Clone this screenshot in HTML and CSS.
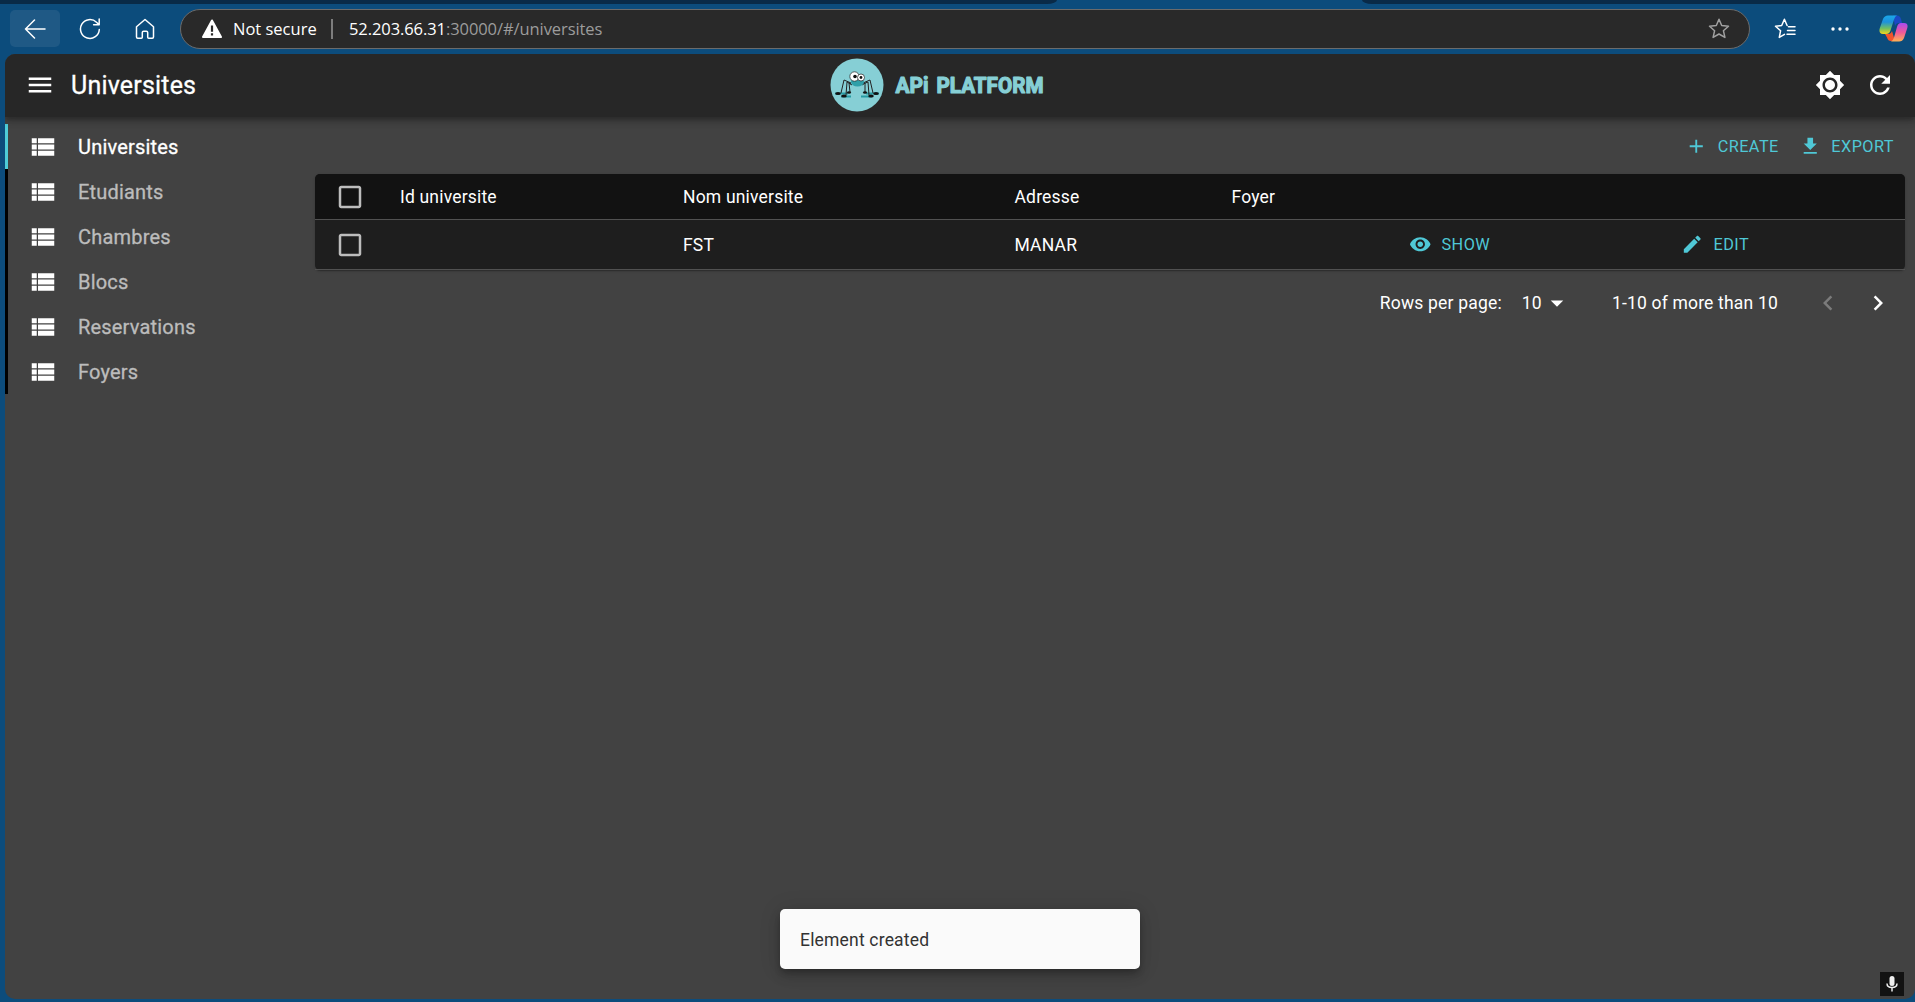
FILE: index.html
```html
<!DOCTYPE html>
<html lang="en">
<head>
<meta charset="utf-8">
<title>Universites</title>
<link rel="stylesheet" href="styles.css">
</head>
<body>
<div class="browser">
  <div class="tabs"><span class="tab-left"></span><span class="tab-right"></span></div>
  <nav class="toolbar">
    <span class="nav-back"><svg width="22" height="20" viewBox="0 0 22 20" class="line"><path d="M10.500 1 1.500 10l9 9M1.500 10H21"/></svg></span>
    <svg class="line nav-reload" width="22" height="22" viewBox="0 0 22 22"><path d="M20.300 11.500a9.400 9.400 0 1 1-2.800-7.200L20 6.600M20.200 1v5.700h-5.600"/></svg>
    <svg class="line nav-home" width="20" height="22" viewBox="0 0 20 22"><path d="M1.500 8.800 10 1.500l8.500 7.300V19q0 1.200-1.200 1.200h-3.600q-1 0-1-1v-4.700q0-1.300-1.300-1.300H8.600q-1.300 0-1.300 1.300v4.700q0 1-1 1H2.700q-1.200 0-1.200-1.200z"/></svg>
    <div class="address">
      <svg width="22" height="20" viewBox="0 0 22 20"><path fill="#fff" stroke="#fff" stroke-width="2" stroke-linejoin="round" d="M11 1.500 20 18H2z"/><path stroke="#292929" stroke-width="2.200" d="M11 6.500v6.200M11 14.300v2.200"/></svg>
      <span class="secure">Not secure</span>
      <span class="bar"></span>
      <span class="url"><b>52.203.66.31</b>:30000/#/universites</span>
      <svg class="line fav" width="22" height="21" viewBox="0 0 22 21"><path d="m11 1.300 2.700 6.200 6.800.7-5.100 4.500 1.500 6.700L11 16l-5.900 3.400 1.500-6.700-5.100-4.500 6.800-.7z"/></svg>
    </div>
    <svg class="line favs" width="22" height="21" viewBox="0 0 22 21"><path d="M10.500 16.300 5.300 19.400l1.300-6.700L1.500 8.200l6.200-.7L10.400 1.300l2.700 6.200M14.500 8.700H21M13.500 12.500H21M13 16.300h8"/></svg>
    <svg class="dots" width="18" height="4" viewBox="0 0 18 4" fill="#fff"><circle cx="2" cy="2" r="1.700"/><circle cx="9" cy="2" r="1.700"/><circle cx="16" cy="2" r="1.700"/></svg>
    <svg class="copilot" width="29" height="27" viewBox="0 0 29 27">
      <defs>
        <linearGradient id="cool" x1="0" y1="0" x2="0" y2="1"><stop offset="0" stop-color="#1aa7e8"/><stop offset=".35" stop-color="#1d91dd"/><stop offset=".7" stop-color="#70bf62"/><stop offset="1" stop-color="#f4d51d"/></linearGradient>
        <linearGradient id="warm" x1="0" y1="0" x2="0" y2="1"><stop offset="0" stop-color="#a64bef"/><stop offset=".5" stop-color="#f0589a"/><stop offset="1" stop-color="#ffb253"/></linearGradient>
      </defs>
      <path fill="#1b49c4" d="M14 .5h4q3 0 4 3.500l1 4h-3q-3 0-4 3z"/>
      <path fill="#f2552c" d="M6 19h4q2 0 3-3l3 10h-4q-3 0-4-3.500z"/>
      <path fill="url(#cool)" d="M9 .500h9q-2 .5-3 4l-3.500 11Q10.500 19 7 19H4Q-.5 19 .7 13.500L4 4Q5.500.5 9 .500z"/>
      <path fill="url(#warm)" d="M20 26.500h-8q2-.5 3-4l3-10.500q1-4 4-4h3q4.500 0 3.300 5L25 23q-1.500 3.500-5 3.500z"/>
    </svg>
  </nav>

  <div class="page">
    <header class="appbar">
      <svg class="mui menu" viewBox="0 0 24 24"><path d="M3 18h18v-2H3v2zm0-5h18v-2H3v2zm0-7v2h18V6H3z"/></svg>
      <h1>Universites</h1>
      <div class="logo">
        <svg width="230" height="54" viewBox="0 0 230 54">
          <circle cx="27" cy="27" r="26.500" fill="#86cfd5"/>
          <path stroke="#279ba4" stroke-width="2" d="M5 35.500h13M11 38.500h10M31 38.500h11M36 35.500h13"/>
          <g fill="none" stroke="#222" stroke-width="1"><path d="M21 25 14 22 11 35M21 26 17 24 16 37M22 27l-3-2 1 9M33 25l7-3 3 13M33 26l5-2 1 13M32 27l3-2v9"/></g>
          <g fill="#111"><ellipse cx="8" cy="35.500" rx="2.800" ry="1.500"/><ellipse cx="14" cy="38" rx="2.800" ry="1.500"/><ellipse cx="19" cy="34.500" rx="2" ry="1.300"/><ellipse cx="35" cy="34.500" rx="2" ry="1.300"/><ellipse cx="41" cy="38" rx="2.800" ry="1.500"/><ellipse cx="46" cy="35.500" rx="2.800" ry="1.500"/></g>
          <ellipse cx="27.500" cy="24" rx="6.500" ry="4.500" fill="#2f9fa8"/>
          <g fill="#fff" stroke="#222" stroke-width=".7"><circle cx="24.500" cy="18.500" r="4.700"/><circle cx="31" cy="19.500" r="3.500"/></g>
          <circle cx="25" cy="18.500" r="1.800" fill="#111"/><circle cx="31" cy="19.500" r="1.400" fill="#111"/>
          <text x="65.500" y="34.500" textLength="33" lengthAdjust="spacingAndGlyphs" class="wordmark">APi</text>
          <text x="106.500" y="34.500" textLength="107" lengthAdjust="spacingAndGlyphs" class="wordmark">PLATFORM</text>
        </svg>
      </div>
      <svg class="mui" viewBox="0 0 24 24"><path d="M20 8.690V4h-4.690L12 .690 8.690 4H4v4.690L.690 12 4 15.310V20h4.690L12 23.310 15.310 20H20v-4.690L23.310 12 20 8.690zM12 18c-3.310 0-6-2.690-6-6s2.690-6 6-6 6 2.690 6 6-2.690 6-6 6zm0-10c-2.210 0-4 1.790-4 4s1.790 4 4 4 4-1.790 4-4-1.790-4-4-4z"/></svg>
      <svg class="mui refresh" viewBox="0 0 24 24"><path d="M17.650 6.350C16.200 4.900 14.210 4 12 4c-4.420 0-7.990 3.580-7.990 8s3.570 8 7.990 8c3.730 0 6.840-2.550 7.730-6h-2.080c-.820 2.330-3.040 4-5.650 4-3.310 0-6-2.690-6-6s2.690-6 6-6c1.660 0 3.140.690 4.220 1.780L13 11h7V4l-2.350 2.350z"/></svg>
    </header>

    <div class="body">
      <aside class="sidebar">
        <svg class="defs" width="0" height="0"><symbol id="list" viewBox="0 0 24 24"><path d="M3 14h4v-4H3v4zm0 5h4v-4H3v4zM3 9h4V5H3v4zm5 5h13v-4H8v4zm0 5h13v-4H8v4zM8 5v4h13V5H8z"/></symbol><symbol id="box" viewBox="0 0 24 24"><path d="M19 5v14H5V5h14m0-2H5c-1.100 0-2 .9-2 2v14c0 1.100.9 2 2 2h14c1.100 0 2-.9 2-2V5c0-1.100-.9-2-2-2z"/></symbol></svg>
        <a class="item active"><svg class="mui"><use href="#list"/></svg>Universites</a>
        <a class="item"><svg class="mui"><use href="#list"/></svg>Etudiants</a>
        <a class="item"><svg class="mui"><use href="#list"/></svg>Chambres</a>
        <a class="item"><svg class="mui"><use href="#list"/></svg>Blocs</a>
        <a class="item"><svg class="mui"><use href="#list"/></svg>Reservations</a>
        <a class="item"><svg class="mui"><use href="#list"/></svg>Foyers</a>
      </aside>

      <main class="content">
        <div class="actions">
          <a class="btn"><svg viewBox="0 0 24 24"><path d="M19 13h-6v6h-2v-6H5v-2h6V5h2v6h6v2z"/></svg>CREATE</a>
          <a class="btn"><svg viewBox="0 0 24 24"><path d="M19 9h-4V3H9v6H5l7 7 7-7zM5 18v2h14v-2H5z"/></svg>EXPORT</a>
        </div>
        <section class="table">
          <div class="row head"><span class="check"><svg class="mui"><use href="#box"/></svg></span><span>Id universite</span><span>Nom universite</span><span>Adresse</span><span>Foyer</span><span></span><span></span></div>
          <div class="row"><span class="check"><svg class="mui"><use href="#box"/></svg></span><span></span><span>FST</span><span>MANAR</span><span></span>
            <a class="btn"><svg viewBox="0 0 24 24"><path d="M12 4.500C7 4.500 2.730 7.610 1 12c1.730 4.390 6 7.500 11 7.500s9.270-3.110 11-7.500c-1.730-4.390-6-7.500-11-7.500zM12 17c-2.760 0-5-2.240-5-5s2.240-5 5-5 5 2.240 5 5-2.240 5-5 5zm0-8c-1.660 0-3 1.340-3 3s1.340 3 3 3 3-1.340 3-3-1.340-3-3-3z"/></svg>SHOW</a>
            <a class="btn"><svg viewBox="0 0 24 24"><path d="M3 17.250V21h3.750L17.810 9.940l-3.750-3.750L3 17.250zM20.710 7.040c.390-.390.390-1.020 0-1.410l-2.340-2.340c-.390-.390-1.020-.390-1.410 0l-1.830 1.830 3.750 3.750 1.830-1.830z"/></svg>EDIT</a>
          </div>
        </section>
        <footer class="pager">
          <span class="rows">Rows per page:</span><span class="size">10</span><svg class="mui caret" viewBox="0 0 24 24"><path d="m7 10 5 5 5-5z"/></svg><span class="range">1-10 of more than 10</span>
          <svg class="mui prev" viewBox="0 0 24 24"><path d="M15.410 7.410 14 6l-6 6 6 6 1.410-1.410L10.830 12z"/></svg>
          <svg class="mui" viewBox="0 0 24 24"><path d="M10 6 8.590 7.410 13.170 12l-4.580 4.590L10 18l6-6z"/></svg>
        </footer>
      </main>
    </div>
    <div class="toast">Element created</div>
    <div class="mic"><svg width="12" height="16" viewBox="0 0 12 16"><rect x="3.500" y="0" width="5" height="10" rx="2.500" fill="#eee"/><path d="M1 7.500q0 4 5 4t5-4M6 11.500v4" fill="none" stroke="#eee" stroke-width="1.500"/></svg></div>
  </div>
</div>
</body>
</html>
```
FILE: styles.css
```css
* { box-sizing: border-box; }
body { margin: 0; overflow: hidden; font-family: Roboto, "Liberation Sans", sans-serif; font-size: 17.5px; color: #fff; }
svg { display: block; flex: none; }
.browser { width: 1915px; height: 1002px; display: flex; flex-direction: column; background: #0c4c7c; }
.tabs { height: 4px; display: flex; justify-content: space-between; }
.tab-left { width: 1057px; background: #092a47; border-bottom-right-radius: 10px 4px; }
.tab-right { width: 553px; background: #092a47; border-bottom-left-radius: 10px 4px; }
.toolbar { height: 50px; display: flex; align-items: center; padding-left: 10px; padding-bottom: 1px; }
.line { fill: none; stroke: #fff; stroke-width: 1.5; stroke-linejoin: round; stroke-linecap: round; }
.nav-back { width: 50px; height: 37px; border-radius: 5px; background: #1f5985; display: flex; align-items: center; justify-content: center; }
.nav-reload { margin-left: 19px; }
.nav-home { margin-left: 34px; }
.address { width: 1571px; height: 40px; margin-left: 25px; border: 1px solid #6b6b6b; border-radius: 20px; background: #292929; display: flex; align-items: center; padding: 0 19px 0 20px; font-family: "Open Sans", "Noto Sans", sans-serif; font-size: 16.5px; }
.secure { margin-left: 10px; width: 98px; white-space: nowrap; }
.bar { width: 2px; height: 20px; background: #7d7d7d; margin-right: 16px; }
.url { color: #9c9c9c; white-space: nowrap; letter-spacing: -.08px; }
.url b { font-weight: 400; color: #fff; }
.fav { margin-left: auto; stroke: #a0a0a0; }
.favs { margin-left: 24px; }
.dots { margin-left: 35px; }
.copilot { margin-left: 30px; margin-right: 7px; }

.page { position: relative; width: 1910px; height: 945px; margin-left: 5px; background: #424242; border-radius: 10px; overflow: hidden; display: flex; flex-direction: column; }
.mui { width: 30px; height: 30px; fill: currentColor; }
.appbar { height: 63px; flex: none; display: flex; align-items: center; padding: 0 20px 1px; background: #272727; box-shadow: 0 2px 5px rgba(0,0,0,.2), 0 5px 6px rgba(0,0,0,.14), 0 1px 12px rgba(0,0,0,.12); position: relative; }
.appbar h1 { margin: 1px 0 0 16px; width: 759px; font-size: 25px; font-weight: 400; letter-spacing: .19px; -webkit-text-stroke: .3px; }
.logo { margin-right: auto; }
.wordmark { font: 700 22px Roboto, sans-serif; fill: #86cfd5; stroke: #86cfd5; stroke-width: 1.2; stroke-linejoin: round; }
.refresh { margin-left: 20px; }

.body { display: flex; }
.sidebar { width: 310px; padding-top: 7px; }
.defs { position: absolute; }
.item { height: 45px; display: flex; align-items: center; gap: 20px; padding-left: 20px; border-left: 3px solid #000; font-size: 20px; letter-spacing: .19px; color: #bcbcbc; -webkit-text-stroke: .3px; }
.item.active { border-color: #4fccd8; color: #fff; }
.item svg { color: #fff; }
.content { width: 1590px; }
.actions { height: 57px; display: flex; justify-content: flex-end; align-items: center; padding: 1px 11px 0 0; gap: 20px; }
.btn { display: flex; align-items: center; gap: 10px; color: #4fc8d6; font-size: 16.25px; letter-spacing: .464px; }
.btn svg { width: 22.5px; height: 22.5px; fill: currentColor; }
.table { border-radius: 5px; background: #1e1e1e; box-shadow: 0 2px 1px -1px rgba(0,0,0,.2), 0 1px 3px rgba(0,0,0,.2); }
.row { height: 50px; display: grid; grid-template-columns: 85px 283px 331.500px 217px 177.500px 272px 1fr; align-items: center; border-bottom: 1px solid #515151; letter-spacing: .1875px; }
.row.head { height: 46px; background: #121212; border-radius: 5px 5px 0 0; }
.check { padding-left: 20px; color: #bdbdbd; }
.pager { height: 65px; display: flex; align-items: center; justify-content: flex-end; padding-right: 12px; letter-spacing: .1875px; }
.size { margin-left: 20px; }
.caret { margin: 0 40px 0 0; }
.prev { margin: 0 20px 0 35px; color: #7b7b7b; }

.toast { position: absolute; left: 775px; top: 855px; width: 360px; height: 60px; padding: 1px 0 0 20px; display: flex; align-items: center; background: #fafafa; color: #323232; border-radius: 5px; box-shadow: 0 4px 6px -1px rgba(0,0,0,.2), 0 7px 12px rgba(0,0,0,.14), 0 1px 22px rgba(0,0,0,.12); letter-spacing: .1875px; }
.mic { position: absolute; left: 1875px; top: 918px; width: 24px; height: 24px; display: flex; align-items: center; justify-content: center; background: #121212; }
```
